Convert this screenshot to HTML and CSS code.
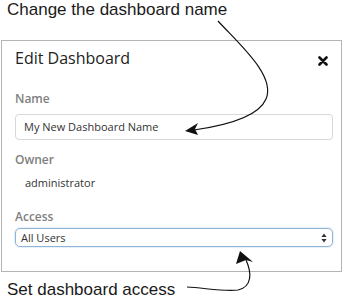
FILE: index.html
```html
<!DOCTYPE html>
<html>
<head>
<meta charset="utf-8">
<link rel="stylesheet" href="styles.css">
</head>
<body>
<div class="page">
  <div class="note note-top">Change the dashboard name</div>
  <div class="dialog">
    <div class="dialog-head">
      <div class="title">Edit Dashboard</div>
      <svg class="close" width="10" height="10" viewBox="0 0 10 10"><path d="M1.5 1.5 L8.5 8.5 M8.5 1.5 L1.5 8.5" stroke="#111" stroke-width="2.6" stroke-linecap="round"/></svg>
    </div>
    <div class="field field-name">
      <div class="label">Name</div>
      <div class="input">My New Dashboard Name</div>
    </div>
    <div class="field field-owner">
      <div class="label">Owner</div>
      <div class="value">administrator</div>
    </div>
    <div class="field field-access">
      <div class="label">Access</div>
      <div class="select"><span>All Users</span>
        <svg class="updown" width="6" height="10" viewBox="0 0 6 10"><path d="M3 0.5 L5.6 4 L0.4 4 Z M3 9.5 L5.6 6 L0.4 6 Z" fill="#333"/></svg>
      </div>
    </div>
  </div>
  <div class="note note-bottom">Set dashboard access</div>
  <svg class="arrows" width="344" height="300" viewBox="0 0 344 300">
    <path d="M218 21 C240 45 276 76 266 99 C258 118 222 126 194 130" fill="none" stroke="#111" stroke-width="1.2"/>
    <path d="M185 131 L198 123 L195 129 L198 135 Z" fill="#111"/>
    <path d="M187 287 C205 288 225 292 238 290 C252 287 252 273 246 260" fill="none" stroke="#111" stroke-width="1.2"/>
    <path d="M240 251 L253 262 L246 260 L236 264 Z" fill="#111"/>
  </svg>
</div>
</body>
</html>
```
FILE: styles.css
```css
* { box-sizing: border-box; }
html, body { margin: 0; padding: 0; background: #fff; }
.page {
  position: relative;
  width: 344px;
  height: 300px;
  overflow: hidden;
  font-family: "Open Sans", sans-serif;
}
.note {
  font-family: "Liberation Sans", Arial, sans-serif;
  font-size: 17px;
  color: #1a1a1a;
  line-height: 20px;
  padding-left: 7px;
}
.note-top { height: 40px; }
.note-bottom { padding-top: 8px; }
.dialog {
  margin-left: 1px;
  width: 341px;
  height: 232px;
  border: 1px solid #b4b4b4;
  padding: 6px 9px 0 13px;
}
.dialog-head {
  display: flex;
  justify-content: space-between;
  align-items: flex-start;
  height: 22px;
}
.title {
  font-size: 16px;
  line-height: 22px;
  color: #222;
}
.close { margin: 9px 4px 0 0; }
.field { display: flex; flex-direction: column; }
.label {
  font-size: 12px;
  font-weight: 600;
  color: #808080;
  line-height: 16px;
}
.field-name .label { margin-top: 22px; }
.field-owner .label { margin-top: 12px; }
.field-access .label { margin-top: 16px; }
.input {
  margin-top: 7px;
  width: 318px;
  height: 26px;
  border: 1px solid #d8d8d8;
  border-radius: 4px;
  padding-left: 8px;
  font-size: 11px;
  line-height: 24px;
  color: #333;
}
.value {
  margin-top: 5px;
  padding-left: 10px;
  font-size: 11px;
  line-height: 20px;
  color: #333;
}
.select {
  margin-top: 3px;
  width: 318px;
  height: 19px;
  border: 1px solid #8fb4d6;
  border-radius: 5px;
  box-shadow: 0 0 2px #a9cbea;
  padding: 0 5px 0 5px;
  font-size: 11px;
  line-height: 17px;
  color: #333;
  display: flex;
  justify-content: space-between;
  align-items: center;
}
.arrows {
  position: absolute;
  left: 0;
  top: 0;
}
```
